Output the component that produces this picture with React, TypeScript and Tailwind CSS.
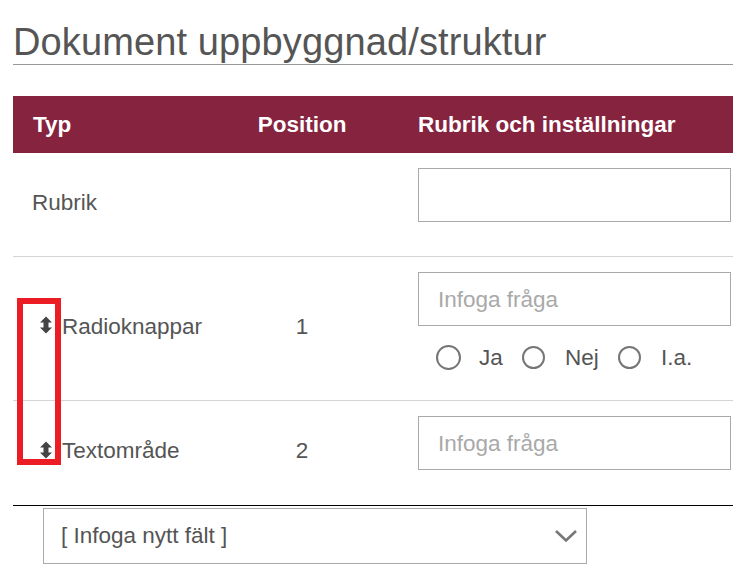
function MoveIcon() {
  return (
    <svg width="14" height="18" viewBox="0 0 14 18" className="text-[#444]">
      <path d="M7 0.5 L13 6.5 H9.5 V11.5 H13 L7 17.5 L1 11.5 H4.5 V6.5 H1 Z" fill="currentColor" />
    </svg>
  );
}

function Radio({ label, size, labelClass }: { label: string; size: string; labelClass: string }) {
  return (
    <div className="flex items-center">
      <span className={`${size} rounded-full border-2 border-[#757575] bg-white`} />
      <span className={labelClass}>{label}</span>
    </div>
  );
}

function TextBox({ placeholder }: { placeholder?: string }) {
  return (
    <div className="h-[54px] w-[313px] border border-[#aaaaaa] pl-[19px] pt-[2px] flex items-center text-[#a9a9a9]">
      {placeholder}
    </div>
  );
}

export default function App() {
  return (
    <div className="relative w-[733px] h-[576px] overflow-hidden bg-white pl-[13px] font-['Liberation_Sans',Arial,sans-serif] text-[22.5px] text-[#555555]">
      <h1 className="h-[65px] pt-[18px] text-[38px] leading-[48px] tracking-[0.12px] border-b border-[#999999] text-[#555555]">
        Dokument uppbyggnad/struktur
      </h1>

      <div className="mt-[31px] h-[57px] grid grid-cols-[225px_128px_1fr] items-center bg-[#862440] text-white font-bold">
        <div className="pl-5">Typ</div>
        <div className="text-center">Position</div>
        <div className="pl-[52px]">Rubrik och inställningar</div>
      </div>

      <div className="h-[104px] grid grid-cols-[225px_128px_1fr] border-b border-[#d4d4d4]">
        <div className="pl-[19px] pt-[35px] leading-[30px]">Rubrik</div>
        <div />
        <div className="pl-[52px] pt-[15px]">
          <TextBox />
        </div>
      </div>

      <div className="h-[144px] grid grid-cols-[225px_128px_1fr] border-b border-[#d4d4d4]">
        <div className="pl-[26px] pt-[55px] flex items-start gap-[10px] leading-[30px]">
          <span className="mt-[4px] -mr-px"><MoveIcon /></span>
          Radioknappar
        </div>
        <div className="text-center pt-[55px] leading-[30px]">1</div>
        <div className="pl-[52px] pt-[15px]">
          <TextBox placeholder="Infoga fråga" />
          <div className="flex items-center mt-[15px] pl-[18px]">
            <Radio label="Ja" size="w-[25px] h-[25px]" labelClass="ml-[18px] w-[43px]" />
            <Radio label="Nej" size="w-[23px] h-[23px]" labelClass="ml-[20px] w-[53px]" />
            <Radio label="I.a." size="w-[23px] h-[23px]" labelClass="ml-[20px]" />
          </div>
        </div>
      </div>

      <div className="h-[105px] grid grid-cols-[225px_128px_1fr] border-b border-black">
        <div className="pl-[26px] pt-[35px] flex items-start gap-[10px] leading-[30px]">
          <span className="mt-[5px] -mr-px"><MoveIcon /></span>
          Textområde
        </div>
        <div className="text-center pt-[35px] leading-[30px]">2</div>
        <div className="pl-[52px] pt-[15px]">
          <TextBox placeholder="Infoga fråga" />
        </div>
      </div>

      <div className="ml-[30px] mt-[2px] w-[544px] h-[56px] border border-[#aaaaaa] flex items-center justify-between pl-[17px] pr-[9px]">
        <span>[ Infoga nytt fält ]</span>
        <svg width="22" height="14" viewBox="0 0 22 14" fill="none" className="text-[#777777]">
          <path d="M1 2 L11 11.5 L21 2" stroke="currentColor" strokeWidth="2.6" />
        </svg>
      </div>

      <div className="absolute left-[17px] top-[298px] w-[44px] h-[167px] border-[6px] border-[#ec1c24]" />
    </div>
  );
}
